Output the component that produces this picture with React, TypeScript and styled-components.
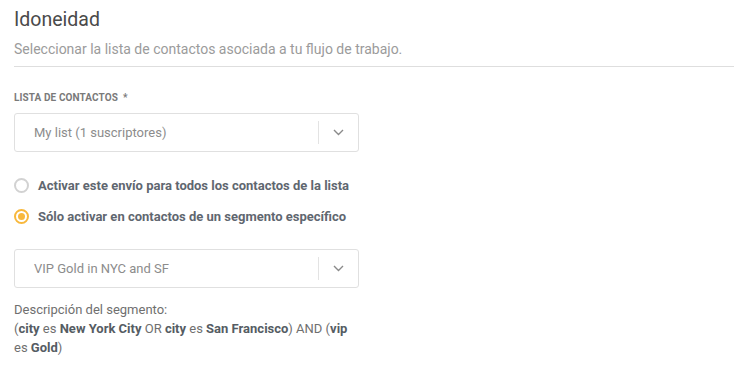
import React from 'react';
import styled, { createGlobalStyle } from 'styled-components';

const GlobalStyle = createGlobalStyle`
  body {
    margin: 0;
    background: #fff;
    font-family: Roboto, "Noto Sans", Arial, sans-serif;
  }
`;

const Page = styled.div`
  padding: 8px 15px 0 14px;
`;

const Title = styled.h2`
  margin: 0;
  font-size: 19.5px;
  font-weight: 400;
  line-height: 24px;
  color: #4a4a4a;
`;

const Subtitle = styled.p`
  margin: 8px 0 0;
  font-size: 14px;
  line-height: 18px;
  color: #9b9b9b;
`;

const Divider = styled.div`
  height: 1px;
  margin-top: 8px;
  background-color: #dedede;
`;

const Label = styled.div`
  margin-top: 24px;
  font-size: 10px;
  font-weight: 700;
  letter-spacing: 0.1px;
  line-height: 14px;
  color: #7a7a7a;
  text-transform: uppercase;
`;

const SelectBox = styled.div<{ mt: number }>`
  display: flex;
  align-items: center;
  box-sizing: border-box;
  width: 345px;
  height: 39px;
  margin-top: ${(p) => p.mt}px;
  border: 1px solid #e0e0e0;
  border-radius: 3px;
  background: #fff;
`;

const SelectValue = styled.span`
  flex: 1 0;
  padding-left: 19px;
  font-size: 13px;
  color: #8c8c8c;
`;

const SelectSep = styled.span`
  width: 1px;
  height: 23px;
  background-color: #e3e3e3;
`;

const SelectArrow = styled.span`
  display: flex;
  align-items: center;
  justify-content: center;
  width: 39px;
  color: #8a8a8a;
`;

const Options = styled.div`
  display: flex;
  flex-direction: column;
  gap: 14px;
  margin-top: 25px;
`;

const Option = styled.label`
  display: flex;
  align-items: center;
  gap: 9px;
  font-size: 13px;
  font-weight: 700;
  line-height: 17px;
  color: #5f6770;
`;

const Radio = styled.span<{ checked?: boolean }>`
  position: relative;
  box-sizing: border-box;
  width: 15px;
  height: 15px;
  border-radius: 50%;
  border: 2px solid ${(p) => (p.checked ? '#f8b83c' : '#d2d2d2')};
  background: #fff;

  &::after {
    content: '';
    display: ${(p) => (p.checked ? 'block' : 'none')};
    position: absolute;
    top: 2px;
    left: 2px;
    width: 7px;
    height: 7px;
    border-radius: 50%;
    background: #f8b83c;
  }
`;

const Description = styled.p`
  width: 345px;
  margin: 12px 0 0;
  font-size: 13px;
  line-height: 19px;
  color: #6f6f6f;

  b {
    font-weight: 700;
    color: #555c63;
  }
`;

function Chevron() {
  return (
    <svg width="11" height="7" viewBox="0 0 11 7" fill="none">
      <path d="M1 1l4.5 4.5L10 1" stroke="currentColor" strokeWidth="1.4" />
    </svg>
  );
}

function Select({ value, mt }: { value: string; mt: number }) {
  return (
    <SelectBox mt={mt}>
      <SelectValue>{value}</SelectValue>
      <SelectSep />
      <SelectArrow>
        <Chevron />
      </SelectArrow>
    </SelectBox>
  );
}

export default function App() {
  return (
    <Page>
      <GlobalStyle />
      <Title>Idoneidad</Title>
      <Subtitle>Seleccionar la lista de contactos asociada a tu flujo de trabajo.</Subtitle>
      <Divider />
      <Label>Lista de contactos &nbsp;*</Label>
      <Select value="My list (1 suscriptores)" mt={8} />
      <Options>
        <Option>
          <Radio />
          Activar este envío para todos los contactos de la lista
        </Option>
        <Option>
          <Radio checked />
          Sólo activar en contactos de un segmento específico
        </Option>
      </Options>
      <Select value="VIP Gold in NYC and SF" mt={24} />
      <Description>
        Descripción del segmento:
        <br />
        (<b>city</b> es <b>New York City</b> OR <b>city</b> es <b>San Francisco</b>) AND (<b>vip</b> es <b>Gold</b>)
      </Description>
    </Page>
  );
}
